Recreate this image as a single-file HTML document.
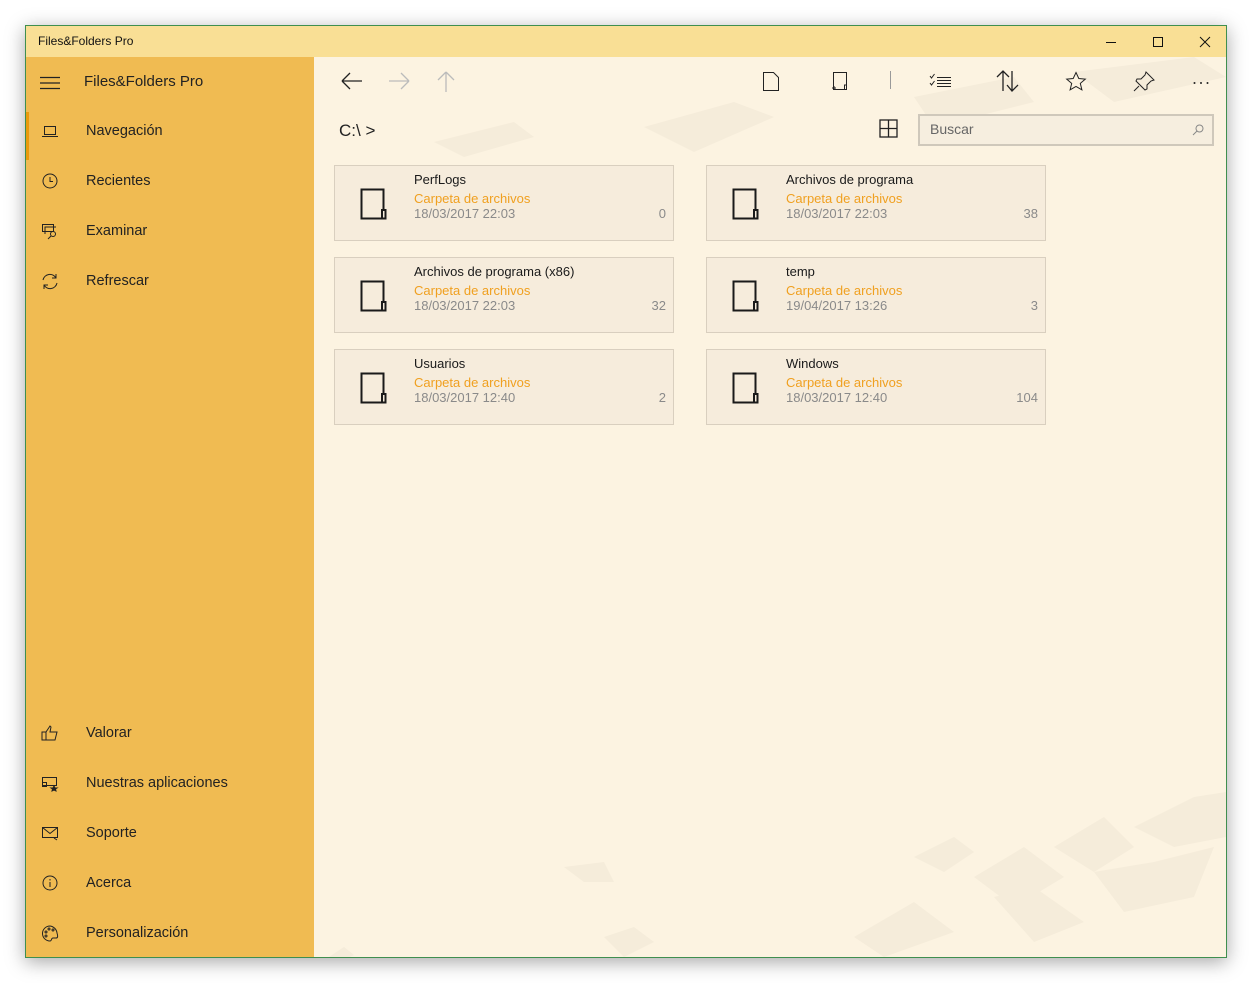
<!DOCTYPE html>
<html><head><meta charset="utf-8"><style>
*{margin:0;padding:0;box-sizing:border-box}
body{width:1252px;height:983px;background:#fff;position:relative;overflow:hidden;font-family:"Segoe UI","Liberation Sans",sans-serif;}
.win{position:absolute;left:25px;top:25px;width:1202px;height:933px;border:1px solid #3f8f4f;box-shadow:0 4px 18px rgba(0,0,0,.35);background:#fcf3e1;overflow:hidden}
.title{position:absolute;left:0;top:0;width:1200px;height:31px;background:#f9df95;font-size:12px;color:#111;line-height:30px;padding-left:12px}
.side{position:absolute;left:0;top:31px;width:288px;height:900px;background:#f0bb52}
.item{position:absolute;left:0;height:40px;width:288px;font-size:14.5px;color:#222;line-height:40px}
.item span{position:absolute;left:60px}
.item svg{position:absolute;left:15px;top:12px}
.main{position:absolute;left:288px;top:31px;width:912px;height:900px}
.card{position:absolute;width:340px;height:76px;background:#f6ecdc;border:1px solid #d9cfbf}
.card .n{position:absolute;left:79px;top:6px;font-size:13px;color:#1a1a1a}
.card .t{position:absolute;left:79px;top:25px;font-size:13px;color:#f0a020}
.card .d{position:absolute;left:79px;top:40px;font-size:13px;color:#8a8a8a}
.card .c{position:absolute;right:7px;top:40px;font-size:13px;color:#8a8a8a}
.card svg{position:absolute;left:25px;top:22px}
.tb{position:absolute;top:14px}
</style></head><body>
<div class="win">
<div class="title">Files&amp;Folders Pro</div>
<svg style="position:absolute;left:1076px;top:8px" width="130" height="16" fill="none" stroke="#111" stroke-width="1"><path d="M4 8.5h10"/><rect x="51.5" y="3.5" width="9" height="9"/><path d="M98 3l10 10M108 3l-10 10"/></svg>
<div class="side">
<svg style="position:absolute;left:14px;top:19px" width="20" height="14" stroke="#222" stroke-width="1.2"><path d="M0 1.5h20M0 7h20M0 12.5h20"/></svg>
<div style="position:absolute;left:58px;top:16px;font-size:15px;color:#222">Files&amp;Folders Pro</div>
<div style="position:absolute;left:0;top:55px;width:3px;height:48px;background:#e99a0c"></div>
<div class="item" style="top:54px"><svg width="18" height="16" fill="none" stroke="#222"><rect x="3.5" y="3.5" width="11" height="8"/><path d="M1 13.5h16"/></svg><span>Navegación</span></div>
<div class="item" style="top:104px"><svg width="18" height="18" fill="none" stroke="#222"><circle cx="9" cy="8" r="7"/><path d="M9 4v4.5h3"/></svg><span>Recientes</span></div>
<div class="item" style="top:154px"><svg width="18" height="18" fill="none" stroke="#222"><rect x="1.5" y="1.5" width="11" height="7"/><path d="M4 11V4h11"/><circle cx="12" cy="11" r="2.5"/><path d="M10 13l-3 3"/></svg><span>Examinar</span></div>
<div class="item" style="top:204px"><svg width="18" height="18" fill="none" stroke="#222"><path d="M2 7a7 7 0 0 1 13-2M16 10a7 7 0 0 1-13 2M15 1v4h-4M3 16v-4h4"/></svg><span>Refrescar</span></div>
<div class="item" style="top:656px"><svg width="18" height="18" fill="none" stroke="#222"><path d="M1 7h4v8H1zM5 7l4-6 1 1-1 5h7l-2 8H5"/></svg><span>Valorar</span></div>
<div class="item" style="top:706px"><svg width="18" height="18" fill="none" stroke="#222"><rect x="1.5" y="2.5" width="14" height="8"/><rect x="1.5" y="7.5" width="4" height="4"/><path d="M13 11l1 2h2l-1.5 1 .5 2-2-1-2 1 .5-2L10 13h2z" fill="#222"/></svg><span>Nuestras aplicaciones</span></div>
<div class="item" style="top:756px"><svg width="18" height="18" fill="none" stroke="#222"><path d="M1.5 2.5h15v10h-15zM1.5 2.5l7.5 6 7.5-6M13 13l3 2"/></svg><span>Soporte</span></div>
<div class="item" style="top:806px"><svg width="18" height="18" fill="none" stroke="#222"><circle cx="9" cy="8" r="7"/><path d="M9 7v5M9 4v1.5"/></svg><span>Acerca</span></div>
<div class="item" style="top:856px"><svg width="18" height="18" fill="none" stroke="#222"><path d="M9 1a7.5 7.5 0 1 0 0 15c2 0 1-3 3-3h3c2 0 2-2 1-5A8 8 0 0 0 9 1z"/><circle cx="5" cy="7" r="1"/><circle cx="8" cy="4" r="1"/><circle cx="12" cy="5" r="1"/><circle cx="5" cy="11" r="1"/></svg><span>Personalización</span></div>
</div>
<div class="main">
<svg style="position:absolute;left:0;top:0" width="912" height="900"><g fill="#f5ecda">
<polygon points="330,70 420,45 460,60 380,95"/><polygon points="600,40 700,20 720,45 620,70"/><polygon points="760,15 880,0 912,20 800,45"/><polygon points="120,85 200,65 220,80 150,100"/>
<polygon points="540,880 600,845 640,875 570,900"/><polygon points="660,820 710,790 750,820 700,850"/><polygon points="740,790 790,760 820,790 780,815"/><polygon points="780,815 840,805 900,790 880,840 810,855"/><polygon points="820,770 880,740 912,735 912,780 860,790"/><polygon points="600,800 640,780 660,795 630,815"/><polygon points="680,840 720,830 770,865 720,885"/><polygon points="250,810 290,805 300,825 270,825"/><polygon points="290,880 320,870 340,885 310,900"/><polygon points="15,900 30,890 40,898 25,905"/></g></svg>
<svg class="tb" style="left:26px" width="24" height="20" fill="none" stroke="#222" stroke-width="1.3"><path d="M2 10h20M2 10l8-8M2 10l8 8"/></svg>
<svg class="tb" style="left:73px" width="24" height="20" fill="none" stroke="#bbb" stroke-width="1.3"><path d="M2 10h20M22 10l-8-8M22 10l-8 8"/></svg>
<svg class="tb" style="left:122px;top:13px" width="20" height="22" fill="none" stroke="#bbb" stroke-width="1.3"><path d="M10 2v20M10 2l-8 8M10 2l8 8"/></svg>
<svg class="tb" style="left:448px;top:14px" width="18" height="22" fill="none" stroke="#222"><path d="M1.5 1.5h10l5 5v13h-15z"/></svg>
<svg class="tb" style="left:515px;top:14px" width="22" height="22" fill="none" stroke="#222"><path d="M4.5 1.5h13v17h-13zM3 17h4M5 15v4"/><rect x="15.5" y="14" width="2" height="4.5"/></svg>
<div style="position:absolute;left:576px;top:14px;width:1px;height:18px;background:#999"></div>
<svg class="tb" style="left:615px;top:15px" width="24" height="18" fill="none" stroke="#222"><path d="M1 4l1.5 2 3-4M1 11l1.5 2 3-4M8 5.5h14M8 8.5h14M8 11.5h14M8 14.5h14"/></svg>
<svg class="tb" style="left:682px;top:13px" width="24" height="22" fill="none" stroke="#222" stroke-width="1.3"><path d="M7 21V1M1 7l6-6 6 6M16 1v20M11 15l5 6 6-6"/></svg>
<svg class="tb" style="left:751px;top:14px" width="22" height="20" fill="none" stroke="#222"><path d="M11 1.5l2.8 6 6.5.6-5 4.3 1.6 6.4L11 15.4l-5.9 3.4 1.6-6.4-5-4.3 6.5-.6z"/></svg>
<svg class="tb" style="left:819px;top:14px" width="22" height="22" fill="none" stroke="#222"><path d="M13 1l8 8-3 1-4 4 0 4-2 1-9-9 1-2h4l4-4zM6 15l-5 5"/></svg>
<svg class="tb" style="left:879px;top:24px" width="16" height="4" fill="#222"><circle cx="1.5" cy="2" r="1"/><circle cx="8" cy="2" r="1"/><circle cx="14.5" cy="2" r="1"/></svg>
<div style="position:absolute;left:25px;top:64px;font-size:17px;color:#222">C:\ &gt;</div>
<svg style="position:absolute;left:565px;top:62px" width="20" height="20" fill="none" stroke="#222" stroke-width="1.3"><rect x="1" y="1" width="17" height="17"/><path d="M9.5 1v17M1 9.5h17"/></svg>
<div style="position:absolute;left:604px;top:57px;width:296px;height:32px;border:2px solid #cfc8bb;background:#f6eedf;font-size:14px;color:#666;padding:5px 10px">Buscar<svg style="position:absolute;right:8px;top:8px" width="12" height="12" fill="none" stroke="#888"><circle cx="7.5" cy="4.5" r="3.5"/><path d="M5 7L1 11"/></svg></div>

<div class="card" style="left:20px;top:108px"><svg width="28" height="32" fill="none" stroke="#1a1a1a" stroke-width="2"><path d="M1.5 1.5h22v29h-22z"/><rect x="22" y="22" width="3.5" height="8.5" fill="#f6ecdc"/></svg><div class="n">PerfLogs</div><div class="t">Carpeta de archivos</div><div class="d">18/03/2017 22:03</div><div class="c">0</div></div>
<div class="card" style="left:392px;top:108px"><svg width="28" height="32" fill="none" stroke="#1a1a1a" stroke-width="2"><path d="M1.5 1.5h22v29h-22z"/><rect x="22" y="22" width="3.5" height="8.5" fill="#f6ecdc"/></svg><div class="n">Archivos de programa</div><div class="t">Carpeta de archivos</div><div class="d">18/03/2017 22:03</div><div class="c">38</div></div>
<div class="card" style="left:20px;top:200px"><svg width="28" height="32" fill="none" stroke="#1a1a1a" stroke-width="2"><path d="M1.5 1.5h22v29h-22z"/><rect x="22" y="22" width="3.5" height="8.5" fill="#f6ecdc"/></svg><div class="n">Archivos de programa (x86)</div><div class="t">Carpeta de archivos</div><div class="d">18/03/2017 22:03</div><div class="c">32</div></div>
<div class="card" style="left:392px;top:200px"><svg width="28" height="32" fill="none" stroke="#1a1a1a" stroke-width="2"><path d="M1.5 1.5h22v29h-22z"/><rect x="22" y="22" width="3.5" height="8.5" fill="#f6ecdc"/></svg><div class="n">temp</div><div class="t">Carpeta de archivos</div><div class="d">19/04/2017 13:26</div><div class="c">3</div></div>
<div class="card" style="left:20px;top:292px"><svg width="28" height="32" fill="none" stroke="#1a1a1a" stroke-width="2"><path d="M1.5 1.5h22v29h-22z"/><rect x="22" y="22" width="3.5" height="8.5" fill="#f6ecdc"/></svg><div class="n">Usuarios</div><div class="t">Carpeta de archivos</div><div class="d">18/03/2017 12:40</div><div class="c">2</div></div>
<div class="card" style="left:392px;top:292px"><svg width="28" height="32" fill="none" stroke="#1a1a1a" stroke-width="2"><path d="M1.5 1.5h22v29h-22z"/><rect x="22" y="22" width="3.5" height="8.5" fill="#f6ecdc"/></svg><div class="n">Windows</div><div class="t">Carpeta de archivos</div><div class="d">18/03/2017 12:40</div><div class="c">104</div></div>
</div>
</div>
</body></html>
